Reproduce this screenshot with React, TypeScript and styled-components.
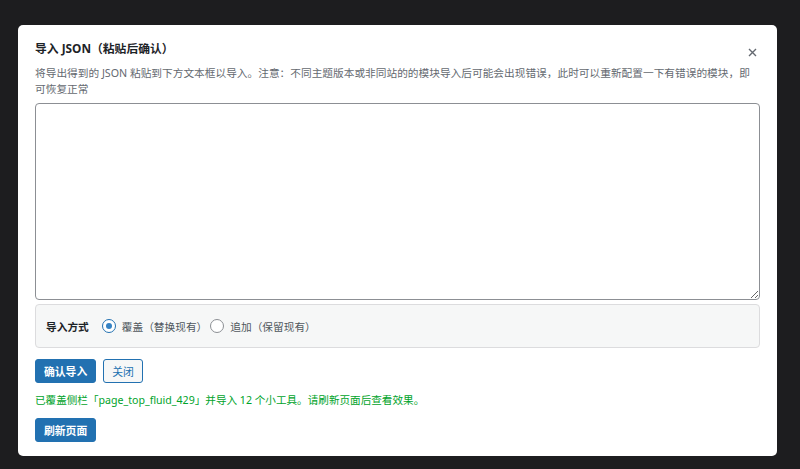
import * as React from "react"
import styled, { createGlobalStyle } from "styled-components"

const GlobalStyle = createGlobalStyle`
  html, body {
    margin: 0;
    padding: 0;
    background: #1d1d1f;
  }
  body {
    font-family: "Noto Sans", "Noto Sans CJK SC", sans-serif;
    color: #1d2327;
  }
  * {
    box-sizing: border-box;
  }
`

const Backdrop = styled.div`
  height: 469px;
  padding: 25px 23px 13px 18px;
`

const Modal = styled.div`
  position: relative;
  width: 759px;
  height: 431px;
  background: #fff;
  border-radius: 5px;
  padding: 13px 17px 0 17px;
  display: flex;
  flex-direction: column;
`

const Title = styled.h2`
  margin: 0;
  font-size: 11.8px;
  line-height: 20px;
  font-weight: 700;
  color: #1d2327;
`

const CloseX = styled.button`
  position: absolute;
  top: 21px;
  right: 19px;
  width: 12px;
  height: 12px;
  padding: 0;
  border: 0;
  background: none;
  display: flex;
  align-items: center;
  justify-content: center;
  cursor: pointer;
`

const Description = styled.p`
  margin: 7px 0 0;
  font-size: 10.7px;
  line-height: 16px;
  color: #646970;
`

const JsonInput = styled.textarea`
  display: block;
  margin-top: 6px;
  width: 100%;
  height: 197px;
  border: 1px solid #8c8f94;
  border-radius: 4px;
  background: #fff;
  font-family: "Liberation Mono", monospace;
  font-size: 12px;
  resize: vertical;
`

const ModePanel = styled.div`
  margin-top: 4px;
  height: 44px;
  display: flex;
  align-items: center;
  padding: 0 10px;
  background: #f6f7f7;
  border: 1px solid #dcdcde;
  border-radius: 4px;
  font-size: 10.7px;
`

const ModeLabel = styled.span`
  font-weight: 700;
  color: #1d2327;
  margin-right: 13px;
`

const RadioOption = styled.label`
  display: flex;
  align-items: center;
  color: #50575e;
  margin-right: 3px;
`

const RadioDot = styled.span<{ $checked?: boolean }>`
  position: relative;
  width: 14px;
  height: 14px;
  border-radius: 50%;
  border: 1px solid ${(p) => (p.$checked ? "#2271b1" : "#8c8f94")};
  background: #fff;
  margin-right: 6px;
  flex: none;

  &::after {
    content: "";
    display: ${(p) => (p.$checked ? "block" : "none")};
    position: absolute;
    left: 3px;
    top: 3px;
    width: 6px;
    height: 6px;
    border-radius: 50%;
    background: #3582c4;
  }
`

const Actions = styled.div`
  margin-top: 11px;
  display: flex;
  gap: 7px;
`

const Button = styled.button<{ $primary?: boolean }>`
  height: 24px;
  padding: 0 8px;
  font-family: inherit;
  font-size: 10.8px;
  font-weight: ${(p) => (p.$primary ? 700 : 400)};
  border-radius: 3px;
  border: 1px solid #2271b1;
  background: ${(p) => (p.$primary ? "#2271b1" : "#f6f7f7")};
  color: ${(p) => (p.$primary ? "#fff" : "#2271b1")};
  cursor: pointer;
`

const Notice = styled.p`
  margin: 9px 0 0;
  font-size: 10.6px;
  line-height: 16px;
  color: #00a32a;
`

const RefreshRow = styled.div`
  margin-top: 10px;
`

const App = () => (
  <>
    <GlobalStyle />
    <Backdrop>
      <Modal>
        <Title>导入 JSON（粘贴后确认）</Title>
        <CloseX aria-label="关闭">
          <svg width="9" height="9" viewBox="0 0 9 9">
            <path d="M1 1 L8 8 M8 1 L1 8" stroke="#646970" strokeWidth="1.4" />
          </svg>
        </CloseX>
        <Description>
          将导出得到的 JSON
          粘贴到下方文本框以导入。注意：不同主题版本或非同站的的模块导入后可能会出现错误，此时可以重新配置一下有错误的模块，即可恢复正常
        </Description>
        <JsonInput />
        <ModePanel>
          <ModeLabel>导入方式</ModeLabel>
          <RadioOption>
            <RadioDot $checked />
            覆盖（替换现有）
          </RadioOption>
          <RadioOption>
            <RadioDot />
            追加（保留现有）
          </RadioOption>
        </ModePanel>
        <Actions>
          <Button $primary>确认导入</Button>
          <Button>关闭</Button>
        </Actions>
        <Notice>
          已覆盖侧栏「page_top_fluid_429」并导入 12 个小工具。请刷新页面后查看效果。
        </Notice>
        <RefreshRow>
          <Button $primary>刷新页面</Button>
        </RefreshRow>
      </Modal>
    </Backdrop>
  </>
)

export default App
